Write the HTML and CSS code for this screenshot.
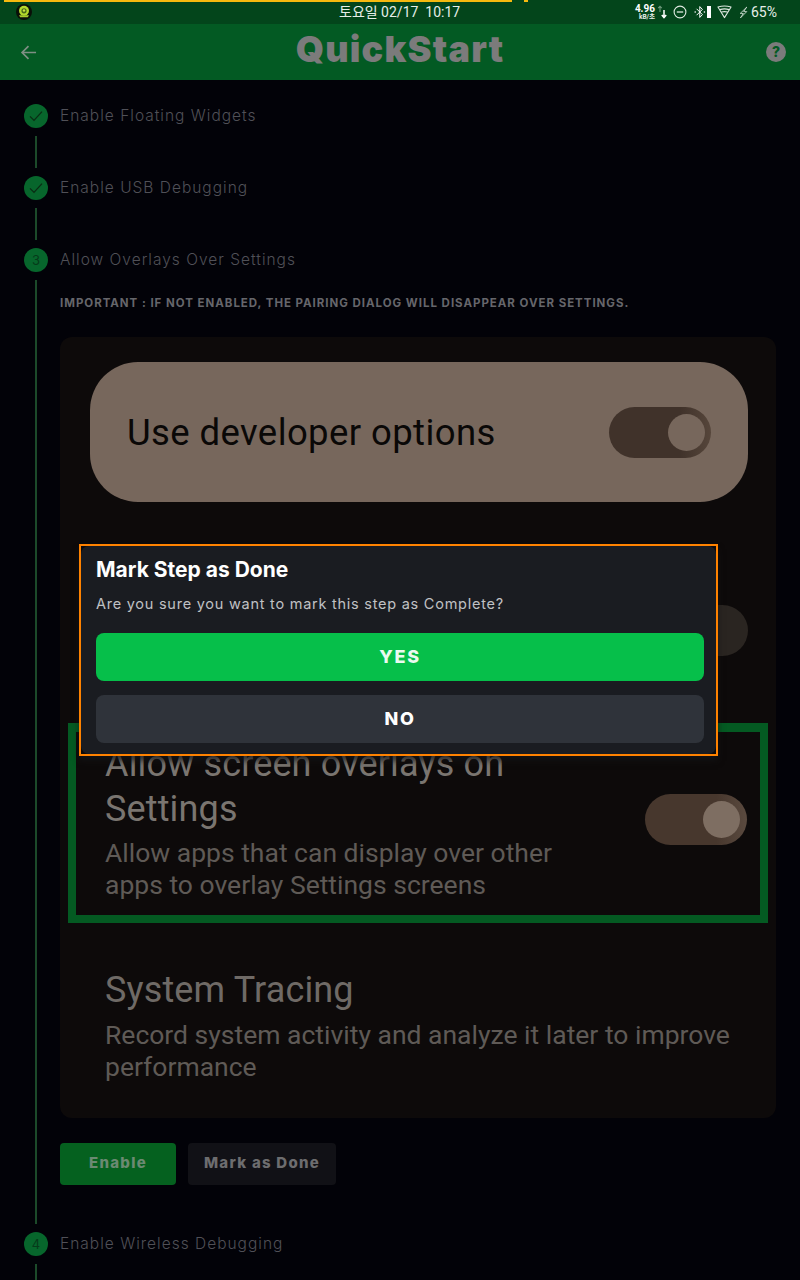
FILE: index.html
```html
<!DOCTYPE html>
<html lang="en">
<head>
<meta charset="utf-8">
<title>QuickStart</title>
<link rel="stylesheet" href="styles.css">
</head>
<body>
<div class="app">
  <header class="status">
    <div class="progress"><span class="progress-main"></span><span class="progress-tail"></span></div>
    <svg class="avatar" viewBox="0 0 16 16">
      <circle cx="8" cy="8" r="8" fill="#0a0f08"/>
      <circle cx="8" cy="6.8" r="5" fill="#b4d82c"/>
      <circle cx="8" cy="6.8" r="2.6" fill="#4d6a1a"/>
      <circle cx="8" cy="6.5" r="1.2" fill="#c6e640"/>
      <path d="M3 11.2h10l-1.2 2h-7.6z" fill="#a9cc2c"/>
    </svg>
    <div class="clock">토요일 02/17&nbsp; 10:17</div>
    <div class="sys">
      <div class="speed"><span class="speed-num">4.96</span><span class="speed-unit">kB/초</span></div>
      <svg class="ic-arrows" viewBox="0 0 10 14">
        <path d="M3 7V1.5M1.2 3.2 3 1.2l1.8 2" fill="none" stroke="#6f9a7c" stroke-width="1.1"/>
        <path d="M7 5v7.5M4.8 10 7 12.6 9.2 10" fill="none" stroke="#fff" stroke-width="1.5"/>
      </svg>
      <svg class="ic-dnd" viewBox="0 0 14 14">
        <circle cx="7" cy="7" r="5.9" fill="none" stroke="#dfe9e1" stroke-width="1.1"/>
        <path d="M3.8 7h6.4" stroke="#dfe9e1" stroke-width="1.3"/>
      </svg>
      <svg class="ic-bt" viewBox="0 0 12 14">
        <path d="M2.6 3.8 8.4 9.6 5.8 12.4V1.6L8.4 4.4 2.6 10.2" fill="none" stroke="#fff" stroke-width="1"/>
        <circle cx="1.2" cy="7" r=".8" fill="#fff"/><circle cx="10.4" cy="7" r=".8" fill="#fff"/>
      </svg>
      <span class="ic-bar"></span>
      <svg class="ic-wifi" viewBox="0 0 16 14">
        <path d="M1 1.6Q8-.4 15 1.6L8 13z" fill="none" stroke="#dfe9e1" stroke-width="1.1" stroke-linejoin="round"/>
        <path d="M3 4.4Q8 3 13 4.4M4.6 7Q8 6 11.4 7" fill="none" stroke="#dfe9e1" stroke-width="1.3"/>
      </svg>
      <svg class="ic-bolt" viewBox="0 0 10 14">
        <path d="M8.6 1 1.4 8h3.4L1.6 13 8.6 6H5.2z" fill="none" stroke="#dfe9e1" stroke-width=".9" stroke-linejoin="round"/>
      </svg>
      <span class="battery">65%</span>
    </div>
  </header>

  <nav class="toolbar">
    <svg class="back" viewBox="0 0 18 18">
      <path d="M17 9H2.5M9 2.2 2.2 9 9 15.8" fill="none" stroke="#7f8f84" stroke-width="1.8"/>
    </svg>
    <h1 class="brand">QuickStart</h1>
    <span class="help">?</span>
  </nav>

  <main class="stepper">
    <section class="step">
      <div class="step-head">
        <span class="dot"><svg class="check" viewBox="0 0 14 12"><path d="M1 6.4 5 10.4 13 1.6" fill="none" stroke="#0a2c14" stroke-width="1.3"/></svg></span>
        <span class="step-title">Enable Floating Widgets</span>
      </div>
      <div class="connector"></div>
    </section>
    <section class="step">
      <div class="step-head">
        <span class="dot"><svg class="check" viewBox="0 0 14 12"><path d="M1 6.4 5 10.4 13 1.6" fill="none" stroke="#0a2c14" stroke-width="1.3"/></svg></span>
        <span class="step-title">Enable USB Debugging</span>
      </div>
      <div class="connector"></div>
    </section>
    <section class="step">
      <div class="step-head">
        <span class="dot">3</span>
        <span class="step-title">Allow Overlays Over Settings</span>
      </div>
      <div class="connector connector-open">
        <p class="notice">IMPORTANT : IF NOT ENABLED, THE PAIRING DIALOG WILL DISAPPEAR OVER SETTINGS.</p>
        <div class="card">
          <div class="pill">
            <span class="pill-text">Use developer options</span>
            <span class="toggle toggle-pill"><span class="thumb"></span></span>
          </div>
          <div class="hidden-row"><span class="toggle toggle-dim"><span class="thumb"></span></span></div>
          <div class="highlight">
            <div class="setting">
              <div class="setting-name">Allow screen overlays on Settings</div>
              <div class="setting-desc setting-desc-tight">Allow apps that can display over other apps to overlay Settings screens</div>
            </div>
            <span class="toggle toggle-on"><span class="thumb"></span></span>
          </div>
          <div class="setting setting-plain">
            <div class="setting-name">System Tracing</div>
            <div class="setting-desc">Record system activity and analyze it later to improve performance</div>
          </div>
        </div>
        <div class="actions">
          <button class="btn btn-enable">Enable</button>
          <button class="btn btn-done">Mark as Done</button>
        </div>
      </div>
    </section>
    <section class="step">
      <div class="step-head">
        <span class="dot">4</span>
        <span class="step-title">Enable Wireless Debugging</span>
      </div>
      <div class="connector"></div>
    </section>
  </main>

  <div class="dialog">
    <div class="dialog-inner">
      <h2 class="dialog-title">Mark Step as Done</h2>
      <p class="dialog-text">Are you sure you want to mark this step as Complete?</p>
      <button class="dialog-btn dialog-yes">YES</button>
      <button class="dialog-btn dialog-no">NO</button>
    </div>
  </div>
</div>
</body>
</html>
```
FILE: styles.css
```css
* { box-sizing: border-box; }
html, body { margin: 0; padding: 0; background: #020208; }
.app {
  position: relative;
  width: 800px;
  height: 1280px;
  overflow: hidden;
  background: #020208;
  font-family: Inter, "Noto Sans", sans-serif;
}

/* status bar */
.status {
  position: relative;
  height: 24px;
  background: #03451b;
  display: flex;
  align-items: center;
  padding: 0 23px 0 16px;
  font-family: Roboto, "Noto Sans CJK KR", sans-serif;
  color: #e6eee8;
}
.progress { position: absolute; top: 0; left: 4px; display: flex; gap: 12px; }
.progress-main { width: 508px; height: 2px; background: #f6b90f; }
.progress-tail { width: 4px; height: 2px; background: #f6b90f; }
.avatar { width: 16px; height: 16px; }
.clock {
  position: absolute;
  left: 339px;
  top: 3px;
  font-size: 14px;
  line-height: 18px;
  white-space: nowrap;
}
.sys { margin-left: auto; display: flex; align-items: center; }
.speed { display: flex; flex-direction: column; align-items: flex-end; line-height: 1; margin-right: 2px; }
.speed-num { font-size: 10px; font-weight: 700; color: #fff; line-height: 9px; }
.speed-unit { font-size: 6.5px; font-weight: 700; color: #e6eee8; line-height: 8px; }
.ic-arrows { width: 10px; height: 14px; margin-right: 6px; }
.ic-dnd { width: 14px; height: 14px; margin-right: 7px; }
.ic-bt { width: 12px; height: 14px; margin-right: 1px; }
.ic-bar { width: 4px; height: 12px; background: #fff; margin-right: 6px; }
.ic-wifi { width: 15px; height: 14px; margin-right: 7px; }
.ic-bolt { width: 9px; height: 13px; margin-right: 3px; }
.battery { font-size: 14px; line-height: 16px; }

/* toolbar */
.toolbar {
  position: relative;
  height: 56px;
  background: #035a23;
  display: flex;
  align-items: center;
  justify-content: space-between;
  padding: 0 14px 0 20px;
}
.back { width: 17px; height: 17px; }
.brand {
  position: absolute;
  left: 0;
  right: 0;
  top: 2px;
  margin: 0;
  text-align: center;
  font-size: 36px;
  line-height: 46px;
  font-weight: 900;
  letter-spacing: 1.2px;
  color: #7b7b7b;
}
.help {
  width: 20px;
  height: 20px;
  border-radius: 50%;
  background: #7b7b7b;
  color: #035a23;
  font-size: 14px;
  font-weight: 800;
  line-height: 20px;
  text-align: center;
}

/* stepper */
.stepper { padding: 24px 24px 0; }
.step-head { display: flex; align-items: center; gap: 12px; height: 24px; }
.dot {
  flex: none;
  width: 24px;
  height: 24px;
  border-radius: 50%;
  background: #07662c;
  color: #063a1a;
  font-size: 13px;
  line-height: 24px;
  text-align: center;
  display: flex;
  align-items: center;
  justify-content: center;
}
.check { width: 14px; height: 12px; }
.step-title {
  padding-bottom: 2px;
  font-size: 15.5px;
  font-weight: 300;
  letter-spacing: 1px;
  color: #505057;
}
.connector {
  margin: 8px 0 8px 11px;
  height: 32px;
  border-left: 2px solid #1c4a2a;
}
.connector-open {
  height: 944px;
  padding-left: 23px;
  padding-top: 15px;
}
.notice {
  margin: 0 0 26px;
  font-size: 11.5px;
  line-height: 16px;
  font-weight: 700;
  letter-spacing: .97px;
  color: #66666b;
  white-space: nowrap;
}

/* embedded settings picture */
.card {
  width: 716px;
  height: 781px;
  padding: 25px 28px 0 30px;
  border-radius: 12px;
  background: #0d0a0a;
  font-family: Roboto, "Noto Sans", sans-serif;
}
.pill {
  height: 140px;
  border-radius: 48px;
  background: #77675c;
  display: flex;
  align-items: center;
  justify-content: space-between;
  padding: 0 37px;
}
.pill-text { font-size: 36.5px; letter-spacing: .4px; color: #0a0807; }
.toggle {
  flex: none;
  display: block;
  width: 102px;
  height: 51px;
  border-radius: 26px;
  padding: 7px;
}
.thumb { display: block; width: 37px; height: 37px; border-radius: 50%; margin-left: auto; }
.toggle-pill { background: linear-gradient(90deg, #40322a 70%, #56463b 100%); }
.toggle-pill .thumb { background: #77675c; margin-right: -1px; }
.hidden-row { display: flex; justify-content: flex-end; margin-top: 103px; }
.toggle-dim { background: #2a2521; }
.toggle-dim .thumb { background: transparent; }
.highlight {
  margin: 67px -20px 0 -22px;
  height: 200px;
  border-style: solid;
  border-color: #045a22;
  border-width: 9px 8px 8px;
  padding: 10px 13px 0 29px;
  display: flex;
  justify-content: space-between;
  align-items: flex-start;
}
.toggle-on { margin-top: 52px; background: linear-gradient(90deg, #47372d 70%, #5a4a3f 100%); }
.toggle-on .thumb { background: #7e6e62; }
.setting { width: 470px; }
.setting-name { font-size: 36px; line-height: 45px; letter-spacing: .15px; color: #7a7570; }
.setting-desc { margin-top: 6px; font-size: 26.5px; line-height: 32px; color: #5f5a56; }
.setting-desc-tight { margin-top: 5px; }
.setting-plain { width: 640px; margin: 45px 0 0 15px; }
.setting-plain .setting-name { color: #6f6a66; }

.actions { display: flex; gap: 12px; margin-top: 25px; }
.btn {
  height: 42px;
  border: 0;
  border-radius: 4px;
  font-family: Inter, "Noto Sans", sans-serif;
  font-size: 15px;
  font-weight: 800;
  letter-spacing: 1.25px;
  padding: 0 0 3px;
}
.btn-enable { width: 116px; background: #05611f; color: #6b8a72; }
.btn-done { width: 148px; background: #111116; color: #6d6d6f; }

/* dialog */
.dialog {
  position: absolute;
  left: 79px;
  top: 544px;
  width: 639px;
  height: 212px;
  border: 2px solid #ff8200;
  background: #0d0a0a;
  box-shadow: 0 5px 6px rgba(20, 20, 22, .7);
}
.dialog-inner {
  height: 100%;
  padding: 11px 12px 0 15px;
  border-radius: 8px;
  background: #1a1c21;
}
.dialog-title {
  margin: 0;
  font-size: 21px;
  line-height: 26px;
  font-weight: 700;
  color: #fff;
}
.dialog-text {
  margin: 11px 0 19px;
  font-size: 14.5px;
  line-height: 20px;
  letter-spacing: .75px;
  color: #c0c1c4;
}
.dialog-btn {
  display: block;
  width: 100%;
  height: 48px;
  border: 0;
  border-radius: 8px;
  font-family: Inter, "Noto Sans", sans-serif;
  font-size: 18px;
  font-weight: 800;
  letter-spacing: 1.7px;
  padding: 0 0 2px;
}
.dialog-yes { background: #06bf4a; color: #eafaf0; margin-bottom: 14px; }
.dialog-no { background: #2f333a; color: #fff; }
```
